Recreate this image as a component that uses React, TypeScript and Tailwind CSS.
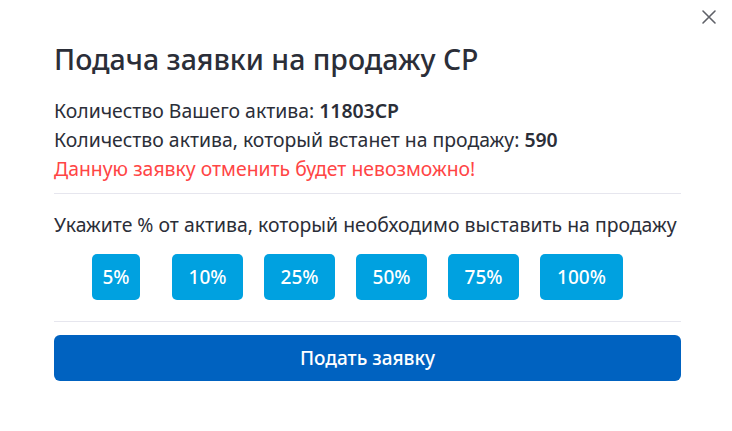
import React from "react";

const percents = ["5%", "10%", "25%", "50%", "75%", "100%"];
const widths = ["w-[48px] mr-[11px]", "w-[71px]", "w-[71px]", "w-[71px]", "w-[71px]", "w-[83px]"];

export default function App() {
  return (
    <div
      className="relative w-[732px] h-[431px] bg-white text-[#2b2e38]"
      style={{ fontFamily: '"Noto Sans", "Open Sans", sans-serif' }}
    >
      {/* close */}
      <button className="absolute top-[9px] right-[15px] w-[16px] h-[16px] text-[#5f6168]">
        <svg viewBox="0 0 16 16" width="16" height="16" fill="none" stroke="currentColor" strokeWidth="1.6" strokeLinecap="round">
          <path d="M2 2L14 14M14 2L2 14" />
        </svg>
      </button>

      <div className="pl-[54px] pr-[51px] pt-[39px]">
        <h2 className="text-[28.5px] leading-[40px] font-medium text-[#2b2e38] whitespace-nowrap">
          Подача заявки на продажу CP
        </h2>

        <div className="mt-[17px] text-[19.4px] leading-[29px] whitespace-nowrap">
          <p>
            Количество Вашего актива: <span className="font-semibold">11803CP</span>
          </p>
          <p>
            Количество актива, который встанет на продажу: <span className="font-semibold">590</span>
          </p>
          <p className="text-[#ff4545]">Данную заявку отменить будет невозможно!</p>
        </div>

        <div className="mt-[10px] border-t border-[#e6e6ee]" />

        <p className="mt-[16px] text-[19.4px] leading-[29px] whitespace-nowrap">
          Укажите % от актива, который необходимо выставить на продажу
        </p>

        <div className="mt-[15px] flex gap-[21px] pl-[38px]">
          {percents.map((p, i) => (
            <button
              key={p}
              className={`${widths[i]} h-[46px] rounded-[5px] bg-[#00a1e0] text-white text-[19px] font-medium`}
            >
              {p}
            </button>
          ))}
        </div>

        <div className="mt-[21px] border-t border-[#e6e6ee]" />

        <button className="mt-[13px] w-full h-[46px] rounded-[6px] bg-[#0062c0] text-white text-[19px] font-medium">
          Подать заявку
        </button>
      </div>
    </div>
  );
}
